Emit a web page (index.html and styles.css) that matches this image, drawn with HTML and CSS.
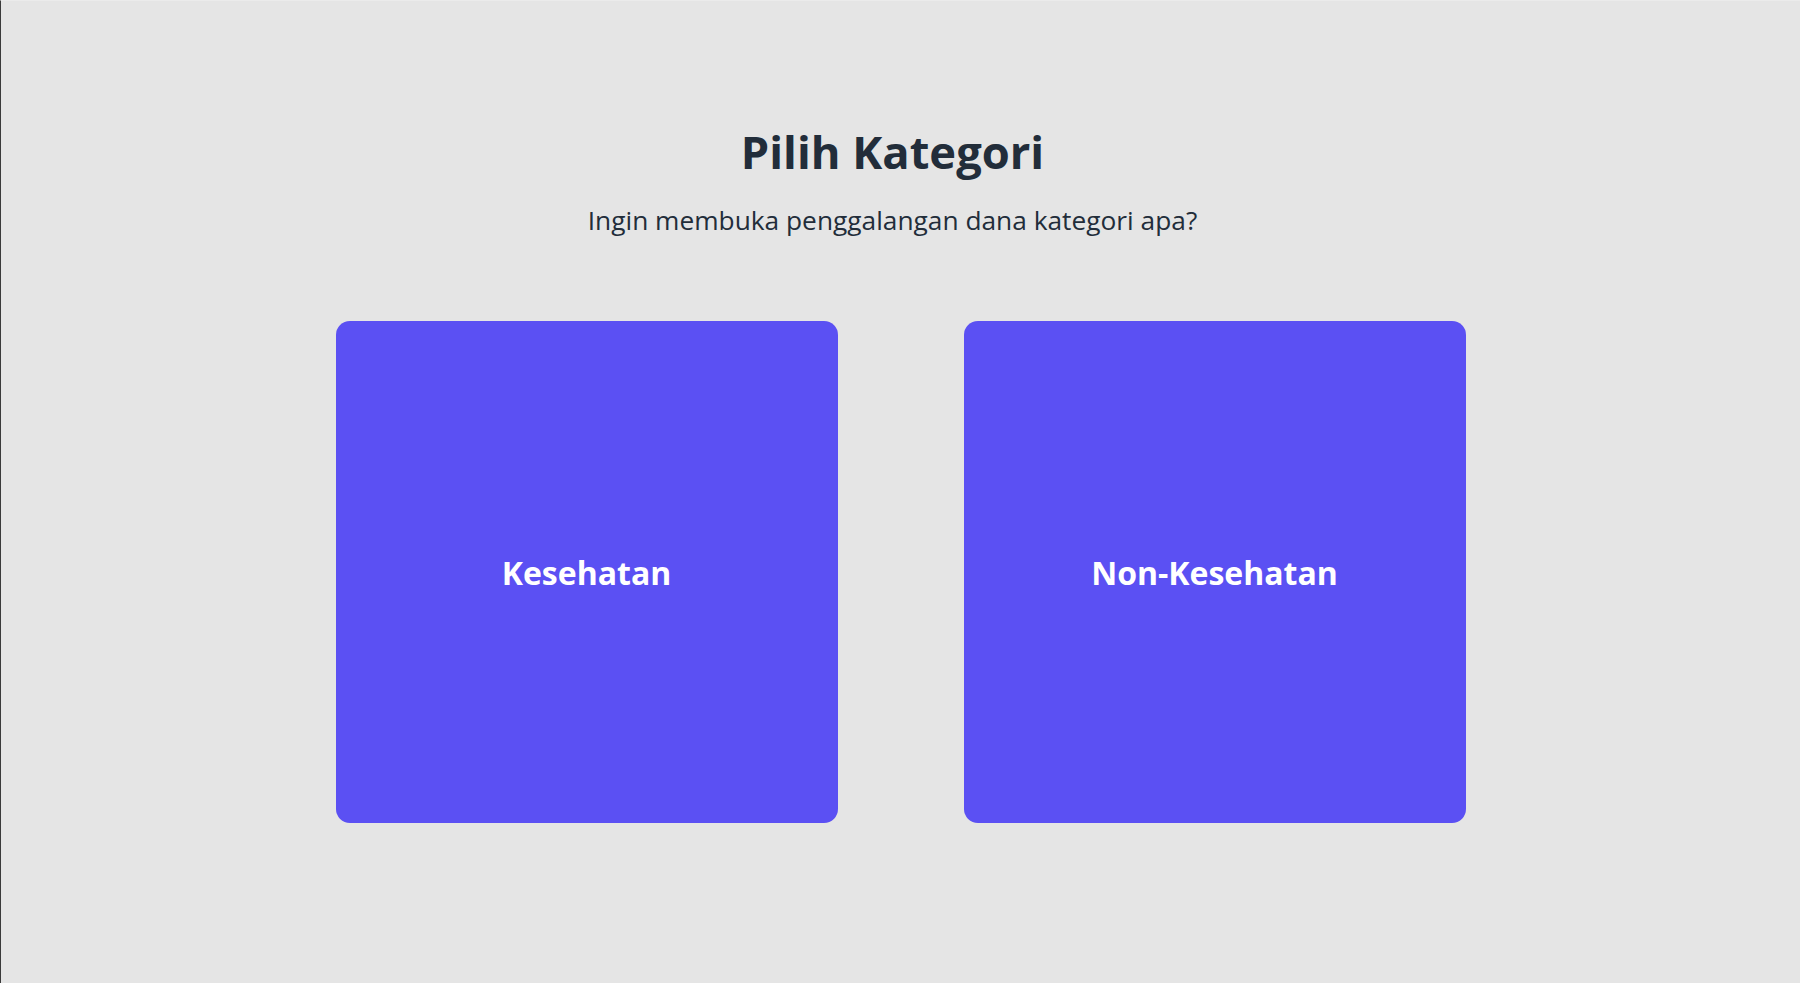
FILE: index.html
```html
<!DOCTYPE html>
<html lang="id">
<head>
<meta charset="utf-8">
<title>Pilih Kategori</title>
<link rel="stylesheet" href="styles.css">
</head>
<body>
<main class="page">
  <header class="intro">
    <h1 class="title">Pilih Kategori</h1>
    <p class="subtitle">Ingin membuka penggalangan dana kategori apa?</p>
  </header>
  <section class="choices">
    <a class="card" href="#">Kesehatan</a>
    <a class="card" href="#">Non-Kesehatan</a>
  </section>
</main>
</body>
</html>
```
FILE: styles.css
```css
html, body {
  margin: 0;
  padding: 0;
  height: 100%;
}
body {
  background: #e5e5e5;
  font-family: "Open Sans", "Noto Sans", sans-serif;
  color: #222d3a;
}
.page {
  box-sizing: border-box;
  min-height: 100vh;
  border-left: 1px solid #3b3b3b;
  border-top: 1px solid #ebebeb;
  display: flex;
  flex-direction: column;
  align-items: center;
  padding-top: 119px;
}
.intro {
  text-align: center;
  padding-right: 16px;
}
.title {
  margin: 0;
  font-size: 45.3px;
  line-height: 64px;
  font-weight: 700;
  color: #222d3a;
}
.subtitle {
  margin: 20px 0 0;
  font-size: 26.3px;
  line-height: 32px;
  color: #222d3a;
}
.choices {
  display: flex;
  gap: 126px;
  margin-top: 85px;
}
.card {
  width: 502px;
  height: 502px;
  background: #5b50f3;
  border-radius: 14px;
  display: flex;
  align-items: center;
  justify-content: center;
  color: #ffffff;
  text-decoration: none;
  font-size: 32px;
  font-weight: 700;
}
```
